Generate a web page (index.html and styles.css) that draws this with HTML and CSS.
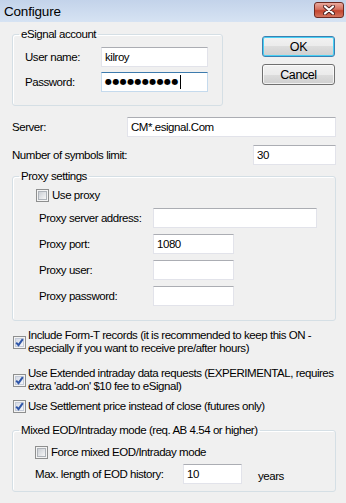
FILE: index.html
```html
<!DOCTYPE html>
<html lang="en">
  <head>
    <meta charset="UTF-8" />
    <meta name="viewport" content="width=device-width, initial-scale=1.0" />
    <title>Configure</title>
    <link rel="stylesheet" href="styles.css">
  </head>
  <body>
    <div class="window">
      <div class="titlebar">
        <span class="title">Configure</span>
        <button class="close" title="Close">
          <svg width="12" height="10" viewBox="0 0 12 10">
            <path d="M2 1.5 L10 8.5 M10 1.5 L2 8.5" stroke="#4a2020" stroke-width="4" stroke-linecap="round" />
            <path d="M2 1.5 L10 8.5 M10 1.5 L2 8.5" stroke="#fff" stroke-width="2.2" stroke-linecap="round" />
          </svg>
        </button>
      </div>

      <div class="content">
        <div class="top">
          <fieldset class="group account">
            <legend>eSignal account</legend>
            <div class="row">
              <label class="lbl-account">User name:</label>
              <div class="field w-account">kilroy</div>
            </div>
            <div class="row gap-5">
              <label class="lbl-account">Password:</label>
              <div class="field w-account focused">
                <span class="dots">●●●●●●●●●●</span><span class="caret"></span>
              </div>
            </div>
          </fieldset>
          <div class="buttons">
            <button class="btn default">OK</button>
            <button class="btn">Cancel</button>
          </div>
        </div>

        <div class="row server">
          <label class="lbl-server">Server:</label>
          <div class="field w-server">CM*.esignal.Com</div>
        </div>
        <div class="row symbols">
          <label>Number of symbols limit:</label>
          <div class="field w-symbols">30</div>
        </div>

        <fieldset class="group proxy">
          <legend>Proxy settings</legend>
          <div class="check-line use-proxy">
            <span class="check"></span>
            <span>Use proxy</span>
          </div>
          <div class="row proxy-row first">
            <label class="lbl-proxy">Proxy server address:</label>
            <div class="field w-address"></div>
          </div>
          <div class="row proxy-row">
            <label class="lbl-proxy">Proxy port:</label>
            <div class="field w-port">1080</div>
          </div>
          <div class="row proxy-row">
            <label class="lbl-proxy">Proxy user:</label>
            <div class="field w-port"></div>
          </div>
          <div class="row proxy-row">
            <label class="lbl-proxy">Proxy password:</label>
            <div class="field w-port"></div>
          </div>
        </fieldset>

        <div class="option form-t">
          <span class="check checked">
            <svg width="9" height="9" viewBox="0 0 9 9"><path d="M1.2 4.6 L3.5 7.2 L7.8 1.2" fill="none" stroke="#2f56a8" stroke-width="2" /></svg>
          </span>
          <p>Include Form-T records (it is recommended to keep this ON -<br>especially if you want to receive pre/after hours)</p>
        </div>
        <div class="option extended">
          <span class="check checked">
            <svg width="9" height="9" viewBox="0 0 9 9"><path d="M1.2 4.6 L3.5 7.2 L7.8 1.2" fill="none" stroke="#2f56a8" stroke-width="2" /></svg>
          </span>
          <p>Use Extended intraday data requests (EXPERIMENTAL, requires<br>extra 'add-on' $10 fee to eSignal)</p>
        </div>
        <div class="option settlement">
          <span class="check checked">
            <svg width="9" height="9" viewBox="0 0 9 9"><path d="M1.2 4.6 L3.5 7.2 L7.8 1.2" fill="none" stroke="#2f56a8" stroke-width="2" /></svg>
          </span>
          <p>Use Settlement price instead of close (futures only)</p>
        </div>

        <fieldset class="group mixed">
          <legend>Mixed EOD/Intraday mode (req. AB 4.54 or higher)</legend>
          <div class="check-line force">
            <span class="check"></span>
            <span>Force mixed EOD/Intraday mode</span>
          </div>
          <div class="row history">
            <label class="lbl-history">Max. length of EOD history:</label>
            <div class="field w-history">10</div>
            <span class="unit">years</span>
          </div>
        </fieldset>
      </div>
    </div>
  </body>
</html>
```

FILE: styles.css
```css
body {
  margin: 0;
  background: #f0f0f0;
  font-family: "Liberation Sans", Arial, sans-serif;
  font-size: 11.5px;
  letter-spacing: -0.45px;
  color: #000;
}
.window {
  width: 346px;
  height: 503px;
  overflow: hidden;
}
.titlebar {
  height: 22px;
  display: flex;
  align-items: center;
  justify-content: space-between;
  padding: 0 2px 0 4px;
  box-sizing: border-box;
  background: linear-gradient(#c3d3ea, #d6e3f3);
}
.title {
  font-size: 13.5px;
  letter-spacing: -0.2px;
}
.close {
  width: 30px;
  height: 16px;
  padding: 0;
  margin-top: -2px;
  border: 1px solid #6e2a22;
  border-radius: 3px;
  background: linear-gradient(#e9a99d, #d5705f 45%, #c4452f 55%, #d4745e);
  display: flex;
  align-items: center;
  justify-content: center;
}

.content {
  padding: 5px 10px 0 12px;
}
.top {
  display: flex;
  align-items: flex-start;
}

/* group boxes */
.group {
  margin: 0;
  padding: 0;
  border: 1px solid #d5dfe5;
  border-radius: 3px;
  box-shadow: inset 1px 1px #fff;
}
.group legend {
  padding: 0 2px;
  margin-left: 6px;
  line-height: 14px;
}
.account {
  width: 211px;
  box-sizing: border-box;
  padding: 6px 0 13px 0;
}
.account .row {
  margin-left: 12px;
}
.proxy {
  margin-top: 4px;
  padding: 5px 0 14px 0;
}
.mixed {
  margin-top: 10px;
  padding: 8px 0 7px 0;
}

/* buttons */
.buttons {
  margin: 9px 1px 0 auto;
  display: flex;
  flex-direction: column;
  gap: 7px;
}
.btn {
  width: 73px;
  height: 21px;
  padding: 0;
  font-family: inherit;
  font-size: 12.5px;
  letter-spacing: -0.4px;
  border: 1px solid #707070;
  border-radius: 3px;
  background: linear-gradient(#f2f2f2, #ebebeb 50%, #dddddd 50%, #cfcfcf);
  box-shadow: inset 0 0 0 1px rgba(255, 255, 255, 0.7);
}
.btn.default {
  border-color: #3c7fb1;
  box-shadow: inset 0 0 0 1px #48d0f4;
}

/* label + textbox rows */
.row {
  display: flex;
  align-items: center;
  height: 20px;
}
.account .gap-5 {
  margin-top: 5px;
}
.row label {
  flex: none;
}
.lbl-account {
  width: 76px;
}
.lbl-server {
  width: 115px;
}
.server {
  margin-top: 11px;
}
.symbols {
  margin-top: 8px;
  justify-content: space-between;
}
.lbl-proxy {
  width: 114px;
}
.proxy-row {
  margin-top: 6px;
  margin-left: 26px;
}
.lbl-history {
  width: 148px;
}
.history {
  margin-top: 5px;
  margin-left: 22px;
}
.unit {
  margin-left: 16px;
  padding-top: 4px;
}

.field {
  height: 20px;
  box-sizing: border-box;
  background: #fff;
  border: 1px solid #e2e3ea;
  border-top-color: #abadb3;
  padding: 0 3px;
  line-height: 18px;
  display: flex;
  align-items: center;
}
.field.focused {
  border-color: #c5daed;
  border-top-color: #3d7bad;
}
.w-account {
  width: 107px;
}
.w-server {
  width: 209px;
}
.w-symbols {
  width: 83px;
}
.w-address {
  width: 164px;
}
.w-port {
  width: 81px;
}
.w-history {
  width: 59px;
}
.dots {
  font-family: "DejaVu Sans", sans-serif;
  font-size: 8px;
  letter-spacing: 0.4px;
}
.caret {
  width: 1px;
  height: 14px;
  background: #000;
  margin-left: 1px;
}

/* checkboxes */
.check {
  flex: none;
  width: 13px;
  height: 13px;
  box-sizing: border-box;
  border: 1px solid #8e8f8f;
  background: #f4f4f4;
  padding: 1px;
  display: flex;
}
.check::before {
  content: "";
  flex: 1;
  border: 1px solid #aeb3b9;
  background: linear-gradient(135deg, #cbcfd5, #f6f6f6);
}
.check.checked {
  position: relative;
}
.check.checked::before {
  border-color: #c4cbd8;
  background: linear-gradient(135deg, #d6dbe6, #f4f5f9);
}
.check svg {
  position: absolute;
  left: 1px;
  top: 1px;
}
.check-line {
  display: flex;
  align-items: center;
  gap: 3px;
  height: 14px;
}
.use-proxy {
  margin-left: 23px;
}
.force {
  margin-left: 22px;
}

.option {
  display: flex;
  align-items: center;
  gap: 2px;
  margin-top: 8px;
  margin-left: 1px;
}
.option p {
  margin: 0;
  line-height: 13px;
}
.extended {
  margin-top: 12px;
}
.settlement {
  margin-top: 7px;
}
```
